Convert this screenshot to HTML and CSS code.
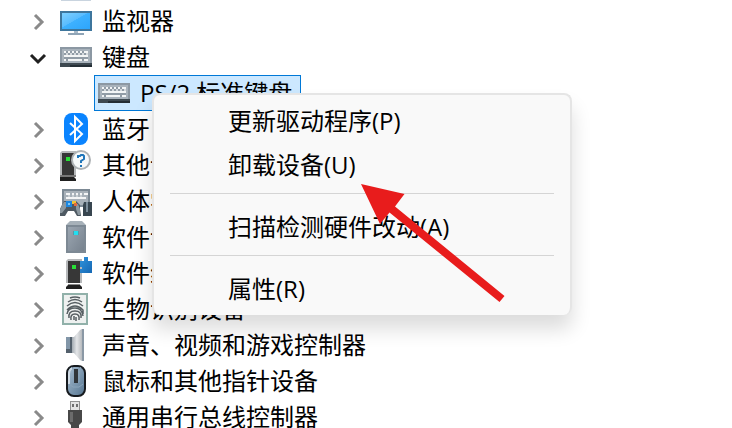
FILE: index.html
```html
<!DOCTYPE html>
<html lang="zh-CN">
<head>
<meta charset="utf-8">
<meta name="viewport" content="width=device-width, initial-scale=1">
<title>设备管理器</title>
<link rel="stylesheet" href="styles.css">
</head>
<body>
<svg class="defs" aria-hidden="true">
  <defs>
    <linearGradient id="screen" x1="0" y1="0" x2="1" y2="1">
      <stop offset="0" stop-color="#7fd0ff"/><stop offset=".45" stop-color="#59bcff"/><stop offset=".46" stop-color="#3eb1ff"/><stop offset="1" stop-color="#2da5fb"/>
    </linearGradient>
    <linearGradient id="box" x1="0" y1="0" x2="1" y2="1">
      <stop offset="0" stop-color="#9ba6b1"/><stop offset="1" stop-color="#77828e"/>
    </linearGradient>
    <linearGradient id="cone" x1="0" y1="0" x2="1" y2="0">
      <stop offset="0" stop-color="#a3abb2"/><stop offset=".4" stop-color="#e4e6e8"/><stop offset="1" stop-color="#a5a9ad"/>
    </linearGradient>
    <linearGradient id="shell" x1="0" y1="0" x2="1" y2="1">
      <stop offset="0" stop-color="#a9bfd3"/><stop offset="1" stop-color="#54748f"/>
    </linearGradient>
    <linearGradient id="plus" x1="0" y1="0" x2="1" y2="1">
      <stop offset="0" stop-color="#2f93dc"/><stop offset="1" stop-color="#1668b4"/>
    </linearGradient>
    <symbol id="chevron" viewBox="0 0 20 20"><path d="M7 3l7 7-7 7" fill="none" stroke="#8a8a8a" stroke-width="3"/></symbol>
    <symbol id="chevron-open" viewBox="0 0 20 20"><path d="M3 7l7 7 7-7" fill="none" stroke="#202020" stroke-width="3"/></symbol>
    <symbol id="keyboard" viewBox="0 0 32 32">
      <g shape-rendering="crispEdges">
        <path fill="#8c98a3" d="M0 6h32v16H0z"/><path fill="#a9b3bc" d="M2 8h28v14H2z"/>
        <path fill="#919ca6" d="M4 10h24v10H4z"/>
        <path fill="#f3f5f6" d="M4 10h2v2H4zM8 10h2v2H8zM12 10h2v2h-2zM16 10h2v2h-2zM20 10h2v2h-2zM24 10h4v2h-4zM4 14h24v2H4zM4 18h2v2H4zM8 18h14v2H8zM24 18h4v2h-4z"/>
        <path fill="#d4d9dd" d="M6 12h2v2H6zM10 12h2v2h-2zM14 12h2v2h-2zM18 12h2v2h-2zM22 12h2v2h-2zM26 12h2v2h-2z"/>
        <path fill="#3e4951" d="M0 22h32v4H0z"/><path fill="#242e35" d="M10 24h22v2H10z"/>
      </g>
    </symbol>
  </defs>
</svg>
<main class="window">
  <ul class="tree">
    <li class="row"><span class="toggle"></span><svg class="icon" viewBox="0 0 32 32"><path fill="#8598aa" d="M1 10h30v21H1z"/><path fill="#c9d4df" d="M1 31h30v1H1z"/></svg></li>
    <li class="row">
      <button class="toggle" aria-label="展开"><svg><use href="#chevron"/></svg></button>
      <svg class="icon" viewBox="0 0 32 32"><path fill="#3e769d" d="M0 6h32v20H0z"/><path fill="url(#screen)" d="M2 8h28v16H2z"/><path fill="#a9bac8" d="M14 26h4v2h-4z"/><path fill="#8fa4b6" d="M8 28h16v2H8z"/></svg>
      <span>监视器</span>
    </li>
    <li>
      <div class="row">
        <button class="toggle" aria-label="折叠"><svg><use href="#chevron-open"/></svg></button>
        <svg class="icon"><use href="#keyboard"/></svg>
        <span>键盘</span>
      </div>
      <ul class="branch">
        <li class="row selected"><svg class="icon"><use href="#keyboard"/></svg><span>PS/2 标准键盘</span></li>
      </ul>
    </li>
    <li class="row">
      <button class="toggle" aria-label="展开"><svg><use href="#chevron"/></svg></button>
      <svg class="icon" viewBox="0 0 32 32"><rect x="4" width="24" height="32" rx="8" fill="#0a84ff"/><path d="M10 10l12 11-7 7V4l7 7-12 11" fill="none" stroke="#fff" stroke-width="2"/></svg>
      <span>蓝牙</span>
    </li>
    <li class="row">
      <button class="toggle" aria-label="展开"><svg><use href="#chevron"/></svg></button>
      <svg class="icon" viewBox="0 0 32 32"><path fill="#b6b8ba" d="M0 4l2-2h14v24H0z"/><path fill="#373737" d="M2 4h12v22H2z"/><path fill="#27df36" d="M6 8h4v4H6z"/><path fill="#777" d="M0 26h16v2H0z"/><path fill="#202020" d="M0 28h14l2 2v2H0z"/><circle cx="21" cy="11" r="9" fill="#f7f9fa" stroke="#aeb2b5" stroke-width="2"/><path d="M18 9V7h2l1-1h2l1 1v3l-3 2v2m0 2v2" fill="none" stroke="#1f75b9" stroke-width="2"/></svg>
      <span>其他设备</span>
    </li>
    <li class="row">
      <button class="toggle" aria-label="展开"><svg><use href="#chevron"/></svg></button>
      <svg class="icon" viewBox="0 0 32 32"><path fill="#7c8994" d="M2 4h28v18H2z"/><path fill="#a8b1b9" d="M4 6h24v14H4z"/><path fill="#f4f5f6" d="M6 8h4v2H6zM12 8h2v2h-2zM16 8h2v2h-2zM20 8h2v2h-2zM24 8h4v2h-4zM6 12h20v2H6z"/><path fill="#c5ccd1" d="M8 10h2v2H8zM12 10h2v2h-2zM16 10h2v2h-2zM20 10h2v2h-2z"/><path fill="#4e5962" d="M2 20l2-4h12l4 4v4l1 7h-4l-3-5H8l-3 5H0v-7z"/><path fill="#8b979f" d="M2 20l2-3h2v6l-4 5H0v-3zM16 19h2l2 5v6h-2l-2-6z"/><path fill="#1c86df" d="M6 16h6v6H6z"/><path fill="#7cc6f5" d="M8 18h2v2H8z"/><path fill="#f0c432" d="M12 16h4v3h-4z"/><path fill="#e46b3c" d="M14 18h3v3h-3z"/><path fill="#384650" d="M24 17h8v14h-9V20z"/><path fill="#7c8d9a" d="M26 17h2v10h-2z"/></svg>
      <span>人体学输入设备</span>
    </li>
    <li class="row">
      <button class="toggle" aria-label="展开"><svg><use href="#chevron"/></svg></button>
      <svg class="icon" viewBox="0 0 32 32"><path fill="#a7b1b9" d="M6 4l4-4h12l4 4v28H6z"/><path fill="#7d8994" d="M6 4h20v28H6z"/><path fill="url(#box)" d="M8 6h16v24H8z"/><path fill="#5799a6" d="M13 10h6v4h-6z"/><path fill="#22def0" d="M14 10h4v4h-4z"/></svg>
      <span>软件设备</span>
    </li>
    <li class="row">
      <button class="toggle" aria-label="展开"><svg><use href="#chevron"/></svg></button>
      <svg class="icon" viewBox="0 0 32 32"><path fill="#b6b8ba" d="M6 4l2-2h14v24H6z"/><path fill="#373737" d="M8 4h12v22H8z"/><path fill="#27df36" d="M12 8h4v4h-4z"/><path fill="#888" d="M8 27h12v1H8z"/><path fill="#202020" d="M8 28h12l2 2v2H6v-2z"/><path fill="url(#plus)" d="M24 0h4v4h4v12H20v-4h2v-2h-2V4h4z"/></svg>
      <span>软件组件</span>
    </li>
    <li class="row">
      <button class="toggle" aria-label="展开"><svg><use href="#chevron"/></svg></button>
      <svg class="icon" viewBox="0 0 32 32"><path fill="#91b1aa" d="M2 0h26v32H2z"/><path fill="#eef1f0" d="M4 2h22v28H4z"/><g fill="none" stroke="#565e62" stroke-width="1.500"><path d="M10 5q5-2 10 0M8 9q7-5 14 0M7 13q8-7 16 0M7 17q8-8 16 0v4M7 21q1-6 8-6t8 8M9 25q-1-7 6-7t6 7M11 27q-1-6 4-6t4 6M14 27v-4M16 28v-4"/></g></svg>
      <span>生物识别设备</span>
    </li>
    <li class="row">
      <button class="toggle" aria-label="展开"><svg><use href="#chevron"/></svg></button>
      <svg class="icon" viewBox="0 0 32 32"><path fill="url(#cone)" d="M12 8h2l6-7 2-1h2v32h-2l-2-1-6-7h-2z"/><path fill="#53606c" d="M6 8h6v16H6z"/><path fill="#8296a8" d="M6 8h4v12H6z"/><path fill="#8a98a5" d="M22 0h2v32h-2z"/></svg>
      <span>声音、视频和游戏控制器</span>
    </li>
    <li class="row">
      <button class="toggle" aria-label="展开"><svg><use href="#chevron"/></svg></button>
      <svg class="icon" viewBox="0 0 32 32"><rect x="7" y="1" width="18" height="30" rx="7" fill="url(#shell)" stroke="#161a1e" stroke-width="2"/><path d="M12 3q-3 2-3 6v10" fill="none" stroke="#d0dbe5" stroke-width="2"/><path d="M11 2l3 3v12h5V5l2-3M9 19l4 3h6l4-3" fill="none" stroke="#8ba5bb" stroke-width="1"/><path fill="#30353a" d="M14 4h4v14h-4z"/></svg>
      <span>鼠标和其他指针设备</span>
    </li>
    <li class="row">
      <button class="toggle" aria-label="展开"><svg><use href="#chevron"/></svg></button>
      <svg class="icon" viewBox="0 0 32 32"><path fill="#929292" d="M10 0h10v10H10z"/><path fill="#e4e4e4" d="M11 1h8v8h-8z"/><path fill="#707070" d="M12 3h2v3h-2zM16 3h2v3h-2z"/><path fill="#484848" d="M8 9h14v12l-3 3v3h-2v5h-4v-5h-2v-3l-3-3z"/><path fill="#6c6c6c" d="M10 11h3v10h-3z"/></svg>
      <span>通用串行总线控制器</span>
    </li>
  </ul>
  <div class="menu" role="menu">
    <button class="item" role="menuitem">更新驱动程序(P)</button>
    <button class="item" role="menuitem">卸载设备(U)</button>
    <hr>
    <button class="item" role="menuitem">扫描检测硬件改动(A)</button>
    <hr>
    <button class="item" role="menuitem">属性(R)</button>
  </div>
  <svg class="pointer" viewBox="0 0 144 118" aria-hidden="true"><path fill="#e81c1c" d="M0 0l43.500 10-9.500 12.500L143.500 112l-5 6L28.500 28.500 19 40z"/></svg>
</main>
</body>
</html>
```
FILE: styles.css
```css
* { box-sizing: border-box; }

body {
  margin: 0;
  background: #fff;
  color: #000;
  font: 24px/36px "Open Sans", "Noto Sans CJK SC", sans-serif;
}

button {
  padding: 0;
  border: 0;
  background: none;
  color: inherit;
  font: inherit;
}

.defs {
  position: absolute;
  width: 0;
  height: 0;
}

.window {
  position: relative;
  height: 100vh;
  overflow: hidden;
}

.tree,
.branch {
  margin: 0;
  padding: 0;
  list-style: none;
}

/* The list is scrolled part of the way past its first row. */
.tree {
  margin-top: -32px;
  padding-left: 28px;
}

.row {
  display: flex;
  height: 36px;
  line-height: 34px;
  white-space: nowrap;
}

.toggle {
  width: 20px;
  height: 36px;
  margin-right: 12px;
}

.toggle svg {
  display: block;
  width: 20px;
  height: 20px;
  margin: auto;
}

.icon {
  flex: none;
  width: 32px;
  height: 32px;
  margin: 1px 10px 0 0;
  overflow: visible;
}

.branch {
  margin: -1px 0 1px;
  padding-left: 66px;
}

.selected {
  width: max-content;
  padding: 0 8px 0 3px;
  border: 1px solid #0078d7;
  background: #cce8ff;
}

.menu {
  position: absolute;
  top: 93px;
  left: 152px;
  width: 420px;
  padding: 4px 0;
  border: 2px solid #e5e5e5;
  border-bottom: 0;
  border-radius: 8px;
  background: #f9f9f9;
  box-shadow: 0 14px 20px rgba(0, 0, 0, 0.14);
}

.item {
  display: block;
  width: 100%;
  padding-left: 74px;
  line-height: 44px;
  text-align: left;
}

.menu hr {
  height: 1px;
  margin: 6px 16px 11px;
  border: 0;
  background: #d5d5d5;
}

.pointer {
  position: absolute;
  top: 184px;
  left: 361px;
  width: 144px;
  height: 118px;
}
```
